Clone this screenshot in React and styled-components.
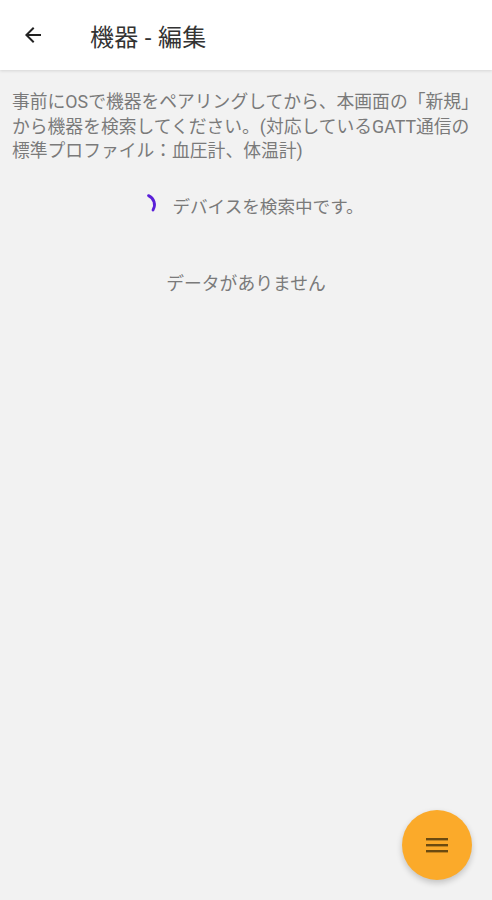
import React from 'react'
import styled, { createGlobalStyle } from 'styled-components'

const GlobalStyle = createGlobalStyle`
  html, body {
    margin: 0;
    padding: 0;
    background: #f2f2f2;
  }
  body {
    font-family: Roboto, "Noto Sans CJK JP", sans-serif;
  }
`;

const Screen = styled.div`
  display: flex;
  flex-direction: column;
  width: 492px;
  height: 900px;
  background-color: #f2f2f2;
  position: relative;
  overflow: hidden;
`;

const AppBar = styled.header`
  display: flex;
  align-items: center;
  height: 70px;
  padding-left: 20px;
  background-color: #fff;
  box-shadow: 0 1px 3px rgba(0, 0, 0, 0.12);
  flex-shrink: 0;
  z-index: 1;
`;

const BackButton = styled.button`
  display: flex;
  align-items: center;
  justify-content: center;
  width: 26px;
  height: 26px;
  padding: 0;
  border: none;
  background: none;
  color: #222;
`;

const Title = styled.h1`
  margin: 0 0 0 44px;
  font-size: 24px;
  font-weight: 400;
  color: #333;
  letter-spacing: 0.3px;
`;

const Content = styled.main`
  display: flex;
  flex-direction: column;
  padding: 20px 12px 0 12px;
`;

const Notice = styled.p`
  margin: 0;
  font-size: 17.8px;
  line-height: 24.5px;
  color: #7a7a7a;
`;

const SearchRow = styled.div`
  display: flex;
  align-items: center;
  justify-content: center;
  gap: 13px;
  margin-top: 29px;
  padding-left: 7px;
`;

const Spinner = styled.svg`
  width: 24px;
  height: 24px;
`;

const StatusText = styled.span`
  font-size: 17.6px;
  color: #7a7a7a;
`;

const EmptyText = styled.div`
  margin-top: 51px;
  text-align: center;
  font-size: 17.8px;
  color: #7a7a7a;
`;

const Fab = styled.button`
  position: absolute;
  right: 20px;
  bottom: 20px;
  width: 70px;
  height: 70px;
  border-radius: 50%;
  border: none;
  background-color: #fbaa2a;
  box-shadow: 0 3px 6px rgba(0, 0, 0, 0.2);
  display: flex;
  align-items: center;
  justify-content: center;
`;

const App = () => {
  return (
    <>
      <GlobalStyle />
      <Screen>
        <AppBar>
          <BackButton aria-label="back">
            <svg width="24" height="24" viewBox="0 0 24 24">
              <path d="M20 11H7.83l5.59-5.59L12 4l-8 8 8 8 1.41-1.41L7.83 13H20v-2z" fill="#222" />
            </svg>
          </BackButton>
          <Title>機器 - 編集</Title>
        </AppBar>
        <Content>
          <Notice>
            事前にOSで機器をペアリングしてから、本画面の「新規」から機器を検索してください。(対応しているGATT通信の標準プロファイル：血圧計、体温計)
          </Notice>
          <SearchRow>
            <Spinner viewBox="0 0 24 24">
              <path d="M13.5 2.6 A10 10 0 0 1 18 17" fill="none" stroke="#5a1fd8" strokeWidth="2.8" strokeLinecap="round" />
            </Spinner>
            <StatusText>デバイスを検索中です。</StatusText>
          </SearchRow>
          <EmptyText>データがありません</EmptyText>
        </Content>
        <Fab aria-label="menu">
          <svg width="22" height="16" viewBox="0 0 22 16">
            <rect x="0" y="1" width="22" height="2.4" fill="#6b4a10" />
            <rect x="0" y="7" width="22" height="2.4" fill="#6b4a10" />
            <rect x="0" y="13" width="22" height="2.4" fill="#6b4a10" />
          </svg>
        </Fab>
      </Screen>
    </>
  )
}

export default App
